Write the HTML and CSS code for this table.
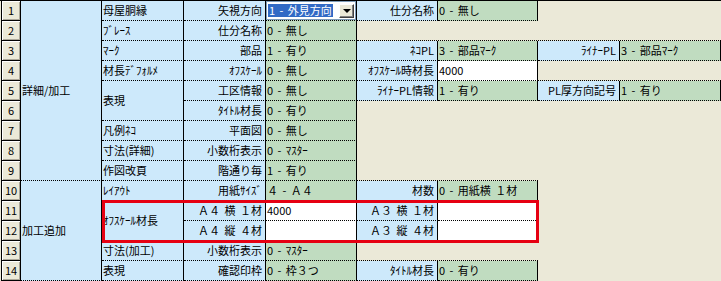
FILE: index.html
```html
<!DOCTYPE html>
<html lang="ja">
<head>
<meta charset="utf-8">
<title>設定</title>
<link rel="stylesheet" href="styles.css">
</head>
<body>
<div class="sheet">
  <!-- row 1 -->
  <div class="c num">1</div>
  <div class="c grp r9">詳細/加工</div>
  <div class="c cat">母屋胴縁</div>
  <div class="c lbl">矢視方向</div>
  <div class="c val cmbcell"><div class="combo"><span class="sel">1 - 外見方向</span><span class="btn"></span></div></div>
  <div class="c lbl">仕分名称</div>
  <div class="c val">0 - 無し</div>
  <div class="emp s2"></div>
  <!-- row 2 -->
  <div class="c num">2</div>
  <div class="c cat">ﾌﾞﾚｰｽ</div>
  <div class="c lbl">仕分名称</div>
  <div class="c val">0 - 無し</div>
  <div class="empb s4"></div>
  <!-- row 3 -->
  <div class="c num">3</div>
  <div class="c cat">ﾏｰｸ</div>
  <div class="c lbl">部品</div>
  <div class="c val">1 - 有り</div>
  <div class="c lbl">ﾈｺPL</div>
  <div class="c val">3 - 部品ﾏｰｸ</div>
  <div class="c lbl">ﾗｲﾅｰPL</div>
  <div class="c val">3 - 部品ﾏｰｸ</div>
  <!-- row 4 -->
  <div class="c num">4</div>
  <div class="c cat">材長ﾃﾞﾌｫﾙﾒ</div>
  <div class="c lbl">ｵﾌｽｹｰﾙ</div>
  <div class="c val">0 - 無し</div>
  <div class="c lbl">ｵﾌｽｹｰﾙ時材長</div>
  <div class="c wht">4000</div>
  <div class="empb s2"></div>
  <!-- row 5 -->
  <div class="c num">5</div>
  <div class="c cat r2">表現</div>
  <div class="c lbl">工区情報</div>
  <div class="c val">0 - 無し</div>
  <div class="c lbl">ﾗｲﾅｰPL情報</div>
  <div class="c val">1 - 有り</div>
  <div class="c lbl">PL厚方向記号</div>
  <div class="c val">1 - 有り</div>
  <!-- row 6 -->
  <div class="c num">6</div>
  <div class="c lbl">ﾀｲﾄﾙ材長</div>
  <div class="c val">0 - 有り</div>
  <div class="empb s2 r4"></div>
  <div class="emp s2 r9"></div>
  <!-- row 7 -->
  <div class="c num">7</div>
  <div class="c cat">凡例ﾈｺ</div>
  <div class="c lbl">平面図</div>
  <div class="c val">0 - 無し</div>
  <!-- row 8 -->
  <div class="c num">8</div>
  <div class="c cat">寸法(詳細)</div>
  <div class="c lbl">小数桁表示</div>
  <div class="c val">0 - ﾏｽﾀｰ</div>
  <!-- row 9 -->
  <div class="c num">9</div>
  <div class="c cat">作図改頁</div>
  <div class="c lbl">階通り毎</div>
  <div class="c val">1 - 有り</div>
  <!-- row 10 -->
  <div class="c num">10</div>
  <div class="c grp r5">加工追加</div>
  <div class="c cat">ﾚｲｱｳﾄ</div>
  <div class="c lbl">用紙ｻｲｽﾞ</div>
  <div class="c val">４ - Ａ４</div>
  <div class="c lbl">材数</div>
  <div class="c val">0 - 用紙横 １材</div>
  <!-- row 11 -->
  <div class="c num">11</div>
  <div class="c cat r2">ｵﾌｽｹｰﾙ材長</div>
  <div class="c lbl">Ａ４ 横 １材</div>
  <div class="c wht">4000</div>
  <div class="c lbl">Ａ３ 横 １材</div>
  <div class="c wht"></div>
  <!-- row 12 -->
  <div class="c num">12</div>
  <div class="c lbl">Ａ４ 縦 ４材</div>
  <div class="c wht"></div>
  <div class="c lbl">Ａ３ 縦 ４材</div>
  <div class="c wht"></div>
  <!-- row 13 -->
  <div class="c num">13</div>
  <div class="c cat">寸法(加工)</div>
  <div class="c lbl">小数桁表示</div>
  <div class="c val">0 - ﾏｽﾀｰ</div>
  <div class="empb s2"></div>
  <!-- row 14 -->
  <div class="c num">14</div>
  <div class="c cat">表現</div>
  <div class="c lbl">確認印枠</div>
  <div class="c val">0 - 枠３つ</div>
  <div class="c lbl">ﾀｲﾄﾙ材長</div>
  <div class="c val">0 - 有り</div>

  <div class="mark"></div>
</div>
</body>
</html>
```

FILE: styles.css
```css
* { box-sizing: border-box; }
html, body { margin: 0; padding: 0; }
body {
  background: #ebe9d8;
  font-family: "Noto Sans CJK JP", "Liberation Sans", sans-serif;
  font-size: 11px;
  color: #000;
  width: 721px;
  height: 281px;
  overflow: hidden;
}
.sheet {
  position: relative;
  display: grid;
  grid-template-columns: 21px 81px 82px 82px 91px 81px 100px 82px 101px;
  grid-template-rows: repeat(14, 20px);
  border-top: 1px solid #000;
  width: 721px;
}
.c {
  border-right: 1px solid #000;
  border-bottom: 1px dotted #000;
  line-height: 19px;
  white-space: nowrap;
  overflow: hidden;
  word-spacing: 2px;
}
.num {
  margin-left: 1px;
  border-left: 1px solid #000;
  border-bottom: 1px solid #000;
  background: #ebe9d8;
  box-shadow: inset 1px 1px 0 #fff, inset -1px -1px 0 #aca899;
  text-align: center;
  word-spacing: 0;
}
.grp, .cat, .lbl { background: #cde9fb; }
.grp, .cat {
  display: flex;
  align-items: center;
  padding-left: 1px;
}
.lbl { text-align: right; padding-right: 3px; }
.val { background: #c0dcc0; padding-left: 1px; }
.wht { background: #fff; padding-left: 1px; }
.emp { background: #ebe9d8; }
.empb { background: #ebe9d8; border-bottom: 1px dotted #000; }
.r2 { grid-row: span 2; }
.r4 { grid-row: span 4; }
.r5 { grid-row: span 5; }
.r9 { grid-row: span 9; }
.s2 { grid-column: span 2; }
.s4 { grid-column: span 4; }

.cmbcell { padding: 0; }
.combo {
  display: flex;
  align-items: center;
  height: 19px;
  background: #fff;
  border: 1px solid #7f9db9;
}
.sel {
  background: #316ac5;
  color: #fff;
  margin-left: 1px;
  padding: 0 1px;
  height: 13px;
  line-height: 13px;
}
.btn {
  margin-left: auto;
  margin-right: 1px;
  width: 15px;
  height: 14px;
  background: #ebe9d8;
  border: 1px solid;
  border-color: #fff #404040 #404040 #fff;
  box-shadow: inset -1px -1px 0 #808080;
  display: flex;
  align-items: center;
  justify-content: center;
}
.btn::after {
  content: "";
  border-left: 4px solid transparent;
  border-right: 4px solid transparent;
  border-top: 4px solid #000;
}
.mark {
  position: absolute;
  left: 102px;
  top: 199px;
  width: 437px;
  height: 43px;
  border: 3px solid #e60012;
}
```
